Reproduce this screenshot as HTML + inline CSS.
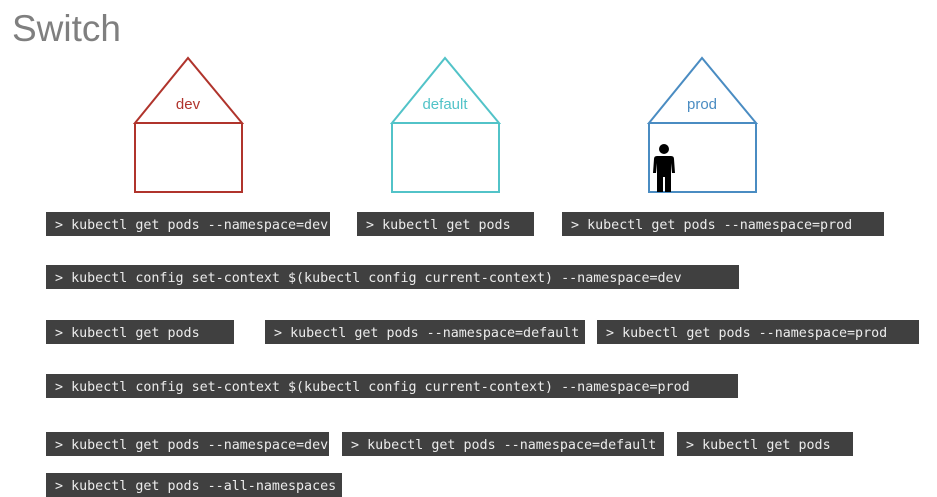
<!DOCTYPE html>
<html><head><meta charset="utf-8"><style>
body{margin:0;width:937px;height:492px;background:#fff;position:relative;overflow:hidden;font-family:"Liberation Sans",sans-serif}
.t{position:absolute;left:12px;top:8px;font-size:37px;color:#7f7f7f}
.c{position:absolute;background:#404040;color:#ececec;font-family:"DejaVu Sans Mono","Liberation Mono",monospace;font-size:13.35px;line-height:27px;height:24px;overflow:hidden;padding-left:9px;box-sizing:border-box;white-space:pre}
.l{position:absolute;font-size:15px;text-align:center;width:100px}
</style></head><body>
<div class="t">Switch</div>
<svg width="937" height="492" style="position:absolute;left:0;top:0">
<g fill="none" stroke-width="2">
<path d="M135 123 L188 58 L242 123 Z M135 123 V192 H242 V123" stroke="#b0342c"/>
<path d="M392 123 L445 58 L499 123 Z M392 123 V192 H499 V123" stroke="#52c3c8"/>
<path d="M649 123 L702 58 L756 123 Z M649 123 V192 H756 V123" stroke="#4a8cc2"/>
</g>
<g fill="#000">
<circle cx="664" cy="149" r="5"/>
<path d="M657 156 H671 Q674 156 674 159 L675 173 H672 L671 163 V192 H665 V177 H663 V192 H657 V163 L656 173 H653 L654 159 Q654 156 657 156 Z"/>
</g>
</svg>
<div class="l" style="left:138px;top:96px;color:#b0342c">dev</div>
<div class="l" style="left:395px;top:96px;color:#52c3c8">default</div>
<div class="l" style="left:652px;top:96px;color:#4a8cc2">prod</div>
<div class="c" style="left:46px;top:212px;width:284px">&gt; kubectl get pods --namespace=dev</div>
<div class="c" style="left:357px;top:212px;width:177px">&gt; kubectl get pods</div>
<div class="c" style="left:562px;top:212px;width:322px">&gt; kubectl get pods --namespace=prod</div>
<div class="c" style="left:46px;top:265px;width:693px">&gt; kubectl config set-context $(kubectl config current-context) --namespace=dev</div>
<div class="c" style="left:46px;top:320px;width:188px">&gt; kubectl get pods</div>
<div class="c" style="left:265px;top:320px;width:320px">&gt; kubectl get pods --namespace=default</div>
<div class="c" style="left:597px;top:320px;width:322px">&gt; kubectl get pods --namespace=prod</div>
<div class="c" style="left:46px;top:374px;width:692px">&gt; kubectl config set-context $(kubectl config current-context) --namespace=prod</div>
<div class="c" style="left:46px;top:432px;width:283px">&gt; kubectl get pods --namespace=dev</div>
<div class="c" style="left:342px;top:432px;width:322px">&gt; kubectl get pods --namespace=default</div>
<div class="c" style="left:677px;top:432px;width:176px">&gt; kubectl get pods</div>
<div class="c" style="left:46px;top:473px;width:296px">&gt; kubectl get pods --all-namespaces</div>
</body></html>
